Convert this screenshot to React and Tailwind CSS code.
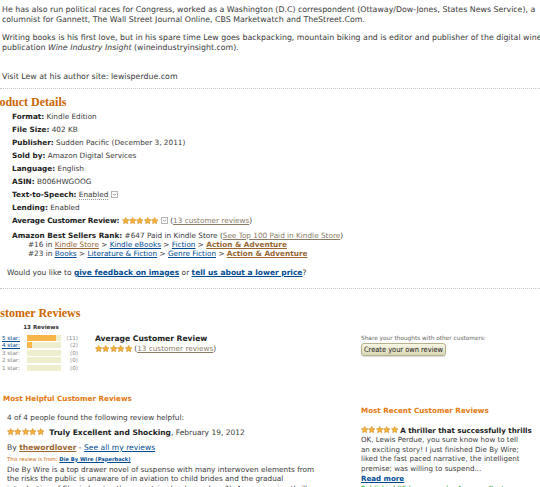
import React from "react";

const Star = ({ s = 7.4 }) => (
  <svg width={s} height={s} viewBox="0 0 20 20" className="block">
    <path
      d="M10 1.2l2.7 5.7 6.2.8-4.6 4.3 1.2 6.2L10 15.1l-5.5 3.1 1.2-6.2L1.1 7.7l6.2-.8z"
      fill="#f8b437"
      stroke="#c8811a"
      strokeWidth="1.4"
    />
  </svg>
);

const Stars = ({ s = 7.4 }) => (
  <span className="inline-flex align-[-1px]">
    {[0, 1, 2, 3, 4].map((i) => (
      <Star key={i} s={s} />
    ))}
  </span>
);

const Caret = () => (
  <svg width="7" height="7" viewBox="0 0 7 7" className="inline-block align-[-1px]">
    <rect x="0.5" y="0.5" width="6" height="6" fill="#fff" stroke="#b5b5b5" />
    <path d="M2 2.8l1.5 1.5L5 2.8" fill="none" stroke="#888" strokeWidth="0.9" />
  </svg>
);

const Row = ({ label, children }) => (
  <div className="h-[13px] leading-[13px]">
    <b className="text-[#222]">{label}</b> {children}
  </div>
);

const histogram = [
  { label: "5 star:", pct: 84, count: "(11)", link: true },
  { label: "4 star:", pct: 14, count: "(2)", link: true },
  { label: "3 star:", pct: 0, count: "(0)" },
  { label: "2 star:", pct: 0, count: "(0)" },
  { label: "1 star:", pct: 0, count: "(0)" },
];

export default function App() {
  return (
    <div className="w-[540px] h-[487px] overflow-hidden bg-white font-['DejaVu_Sans',Verdana,sans-serif] text-[#3a3a3a]">
      {/* about the author */}
      <div className="pl-[2px] pt-[5px] text-[7.85px] leading-[10px] whitespace-nowrap">
        <div>
          He has also run political races for Congress, worked as a Washington (D.C) correspondent (Ottaway/Dow-Jones, States News Service), a
        </div>
        <div>columnist for Gannett, The Wall Street Journal Online, CBS Marketwatch and TheStreet.Com.</div>
        <div className="mt-[8px]">
          Writing books is his first love, but in his spare time Lew goes backpacking, mountain biking and is editor and publisher of the digital wine trade
        </div>
        <div>
          publication <i>Wine Industry Insight</i> (wineindustryinsight.com).
        </div>
        <div className="mt-[19px]">Visit Lew at his author site: lewisperdue.com</div>
      </div>

      <div className="mt-[6px] border-t border-dotted border-[#c4c4c4]" />

      {/* product details */}
      <h2 className="-ml-[13px] mt-[7px] leading-[13px] text-[12px] font-bold text-[#cc6600] font-['Liberation_Serif',serif] whitespace-nowrap">
        Product Details
      </h2>
      <div className="mt-[1px] pl-[12px] text-[7.3px] whitespace-nowrap">
        <Row label="Format:">Kindle Edition</Row>
        <Row label="File Size:">402 KB</Row>
        <Row label="Publisher:">Sudden Pacific (December 3, 2011)</Row>
        <Row label="Sold by:">Amazon Digital Services</Row>
        <Row label="Language:">English</Row>
        <Row label="ASIN:">B006HWGOOG</Row>
        <Row label="Text-to-Speech:">
          <span className="border-b border-dotted border-[#999]">Enabled</span> <Caret />
        </Row>
        <Row label="Lending:">Enabled</Row>
        <div className="h-[14px] leading-[14px]">
          <b className="text-[#222] tracking-[-0.15px]">Average Customer Review:</b> <Stars /> <Caret /> (
          <span className="text-[#8a7a66] underline">13 customer reviews</span>)
        </div>
        <div className="mt-[3px] leading-[9px]">
          <div>
            <b className="text-[#222]">Amazon Best Sellers Rank:</b> #647 Paid in Kindle Store (
            <span className="text-[#8a7a66] underline">See Top 100 Paid in Kindle Store</span>)
          </div>
          <div className="pl-[16px]">
            #16 in <span className="text-[#996633] underline">Kindle Store</span> &gt;{" "}
            <span className="text-[#004b91] underline">Kindle eBooks</span> &gt;{" "}
            <span className="text-[#004b91] underline">Fiction</span> &gt;{" "}
            <b className="text-[#996633] underline">Action &amp; Adventure</b>
          </div>
          <div className="pl-[16px]">
            #23 in <span className="text-[#004b91] underline">Books</span> &gt;{" "}
            <span className="text-[#004b91] underline">Literature &amp; Fiction</span> &gt;{" "}
            <span className="text-[#004b91] underline">Genre Fiction</span> &gt;{" "}
            <b className="text-[#996633] underline">Action &amp; Adventure</b>
          </div>
        </div>
      </div>
      <div className="mt-[10px] pl-[7px] text-[7.5px] leading-[10px] whitespace-nowrap">
        Would you like to <b className="text-[#004b91] underline">give feedback on images</b> or{" "}
        <b className="text-[#004b91] underline">tell us about a lower price</b>?
      </div>

      <div className="mt-[10px] border-t border-dotted border-[#c4c4c4]" />

      {/* customer reviews */}
      <h2 className="-ml-[15px] mt-[18px] leading-[13px] text-[12px] font-bold text-[#cc6600] font-['Liberation_Serif',serif] whitespace-nowrap">
        Customer Reviews
      </h2>
      <div className="flex whitespace-nowrap">
        <div className="pl-[2px] w-[95px]">
          <div className="mt-[3px] w-[78px] text-center text-[5.6px] leading-[8px] font-bold text-[#333]">13 Reviews</div>
          <div className="mt-[3px]">
            {histogram.map((h) => (
              <div key={h.label} className="flex items-center h-[7.5px] text-[5.6px]">
                <span className={`w-[25px] ${h.link ? "text-[#004b91] underline" : "text-[#888]"}`}>{h.label}</span>
                <span className="w-[34px] h-[6px] bg-[#eeeecd]">
                  <span className="block h-full bg-[#fbb447]" style={{ width: `${h.pct}%` }} />
                </span>
                <span className="w-[17px] text-right text-[#888]">{h.count}</span>
              </div>
            ))}
          </div>
        </div>
        <div className="w-[266px] pt-[14px]">
          <div className="text-[7.6px] leading-[10px] font-bold text-[#222]">Average Customer Review</div>
          <div className="text-[7.3px] leading-[10px]">
            <Stars /> (<span className="text-[#8a7a66] underline">13 customer reviews</span>)
          </div>
        </div>
        <div className="pt-[14px]">
          <div className="text-[5.8px] leading-[8px] text-[#666]">Share your thoughts with other customers:</div>
          <div className="mt-[1px] w-[85px] h-[13px] rounded-[3px] border border-[#b4b28c] bg-gradient-to-b from-[#f7f6e4] to-[#d9d7b4] flex items-center justify-center text-[7.4px] text-[#222] font-['Liberation_Sans_Narrow','DejaVu_Sans_Condensed',sans-serif] shadow-[0_1px_1px_rgba(0,0,0,0.15)]">
            Create your own review
          </div>
        </div>
      </div>

      <div className="mt-[22px] flex whitespace-nowrap">
        {/* most helpful */}
        <div className="w-[361px] pl-[3px]">
          <div className="text-[7.2px] leading-[10px] font-bold text-[#e47911]">Most Helpful Customer Reviews</div>
          <div className="pl-[4px]">
            <div className="mt-[9px] text-[7.3px] leading-[10px]">4 of 4 people found the following review helpful:</div>
            <div className="mt-[5px] text-[7.5px] leading-[10px]">
              <Stars /> <b className="ml-[3px] text-[#222]">Truly Excellent and Shocking</b>, February 19, 2012
            </div>
            <div className="mt-[5px] text-[7.6px] leading-[10px]">
              By <b className="text-[#996633] underline">thewordlover</b> -{" "}
              <span className="text-[#004b91] underline">See all my reviews</span>
            </div>
            <div className="mt-[2px] text-[5.2px] leading-[8px]">
              <span className="text-[#cc6600]">This review is from: </span>
              <b className="text-[#004b91] underline">Die By Wire (Paperback)</b>
            </div>
            <div className="mt-[2px] text-[7.3px] leading-[9.5px]">
              <div>Die By Wire is a top drawer novel of suspense with many interwoven elements from</div>
              <div>the risks the public is unaware of in aviation to child brides and the gradual</div>
              <div>introduction of Sharia law in other countries (and soon here?). An engrossing thriller</div>
            </div>
          </div>
        </div>
        {/* most recent */}
        <div className="pt-[12px]">
          <div className="text-[7.2px] leading-[10px] font-bold text-[#e47911]">Most Recent Customer Reviews</div>
          <div className="mt-[10px] text-[7.1px] leading-[9.5px]">
            <div>
              <Stars /> <b className="text-[#222]">A thriller that successfully thrills</b>
            </div>
            <div>OK, Lewis Perdue, you sure know how to tell</div>
            <div>an exciting story! I just finished Die By Wire;</div>
            <div>liked the fast paced narrative, the intelligent</div>
            <div>premise; was willing to suspend...</div>
            <div className="mt-[1px] leading-[10px]">
              <b className="text-[#004b91] underline">Read more</b>
            </div>
            <div className="text-[#339933]">Published 22 hours ago by Amazon Customer</div>
          </div>
        </div>
      </div>
    </div>
  );
}
